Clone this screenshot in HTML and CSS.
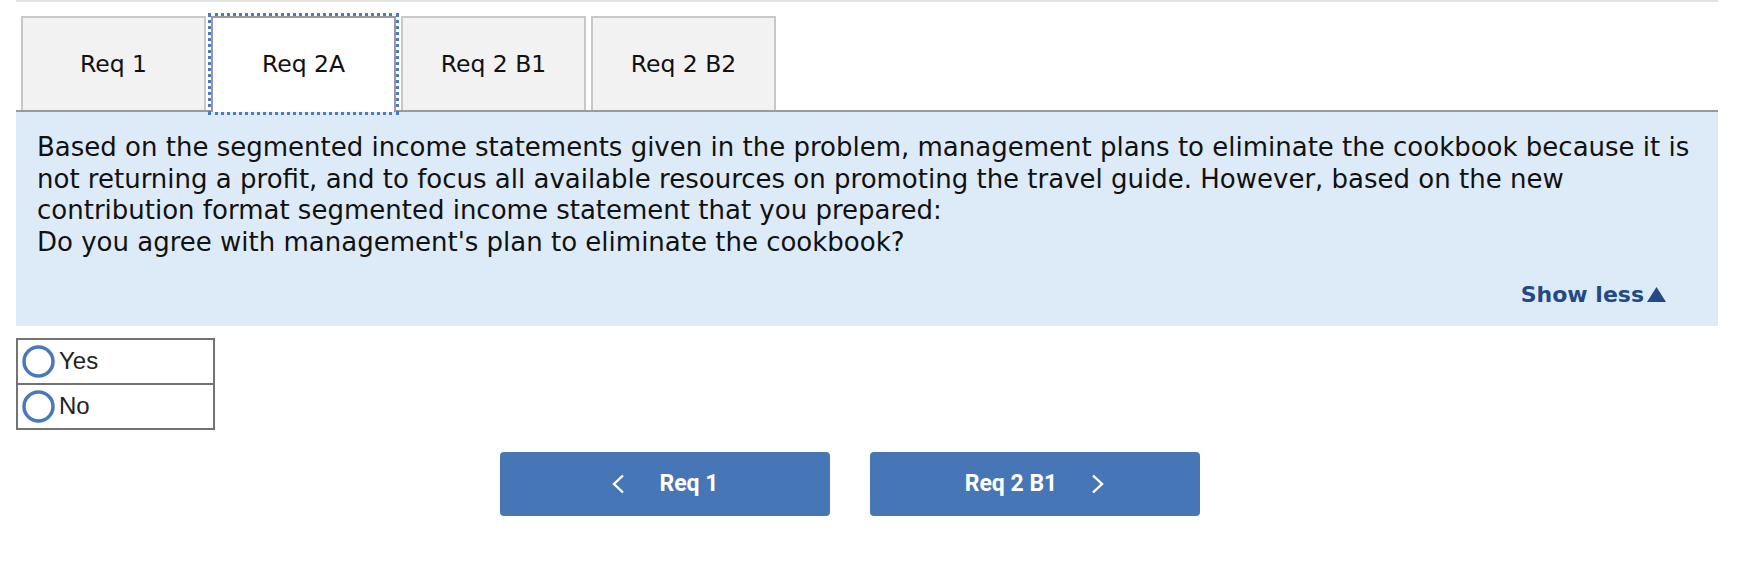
FILE: index.html
```html
<!DOCTYPE html>
<html lang="en">
<head>
<meta charset="utf-8">
<title>Req 2A</title>
<link rel="stylesheet" href="styles.css">
</head>
<body>
<div class="page">
  <div class="topline"></div>
  <div class="tabs">
    <div class="tab">Req 1</div>
    <div class="tab active">Req 2A</div>
    <div class="tab">Req 2 B1</div>
    <div class="tab">Req 2 B2</div>
  </div>
  <div class="panel">
    <p class="question">Based on the segmented income statements given in the problem, management plans to eliminate the cookbook because it is not returning a profit, and to focus all available resources on promoting the travel guide. However, based on the new contribution format segmented income statement that you prepared:<br>Do you agree with management's plan to eliminate the cookbook?</p>
    <div class="showless"><span class="showless-link">Show less</span><svg class="tri" width="19" height="15" viewBox="0 0 19 15"><polygon points="9.5,0 19,15 0,15" fill="#214a86"/></svg></div>
  </div>
  <div class="choices">
    <div class="choice">
      <svg class="radio" width="33" height="33" viewBox="0 0 33 33"><circle cx="16.5" cy="16.5" r="14.5" fill="#fff" stroke="#4a79ba" stroke-width="3.5"/></svg>
      <span class="label">Yes</span>
    </div>
    <div class="choice">
      <svg class="radio" width="33" height="33" viewBox="0 0 33 33"><circle cx="16.5" cy="16.5" r="14.5" fill="#fff" stroke="#4a79ba" stroke-width="3.5"/></svg>
      <span class="label">No</span>
    </div>
  </div>
  <div class="nav">
    <button class="navbtn" type="button">
      <svg class="chev" width="14" height="20" viewBox="0 0 14 20"><polyline points="12,1.5 3,10 12,18.5" fill="none" stroke="#fff" stroke-width="2.4"/></svg>
      <span>Req 1</span>
    </button>
    <button class="navbtn" type="button">
      <span>Req 2 B1</span>
      <svg class="chev" width="14" height="20" viewBox="0 0 14 20"><polyline points="2,1.5 11,10 2,18.5" fill="none" stroke="#fff" stroke-width="2.4"/></svg>
    </button>
  </div>
</div>
</body>
</html>
```
FILE: styles.css
```css
html, body {
  margin: 0;
  padding: 0;
  background: #ffffff;
}

.page {
  margin-left: 16px;
  width: 1702px;
  font-family: "DejaVu Sans", Verdana, sans-serif;
  color: #111111;
}

.topline {
  height: 2px;
  background: #e3e3e3;
}

.tabs {
  display: flex;
  gap: 5px;
  padding-left: 5px;
  margin-top: 14px;
  align-items: flex-start;
}

.tab {
  box-sizing: border-box;
  width: 185px;
  height: 94px;
  border: 2px solid #c8c8c8;
  border-bottom: none;
  background: #f2f2f2;
  display: flex;
  align-items: center;
  justify-content: center;
  font-size: 23.5px;
  color: #111111;
}

.tab.active {
  position: relative;
  z-index: 1;
  height: 96px;
  margin-bottom: -2px;
  padding-bottom: 2px;
  background: #ffffff;
  border-color: #9a9a9a;
  outline: 3px dotted #4a7bc4;
  outline-offset: 0;
}

.panel {
  border-top: 2px solid #9a9a9a;
  background: #ddebf8;
  padding: 20px 21px 18px 21px;
}

.question {
  margin: 0;
  font-size: 26px;
  line-height: 31.6px;
  color: #111111;
}

.showless {
  margin-top: 22.5px;
  display: flex;
  justify-content: flex-end;
  align-items: center;
  gap: 3px;
  padding-right: 31px;
  height: 27px;
}

.showless-link {
  font-weight: bold;
  font-size: 22px;
  line-height: 27px;
  color: #214a86;
}

.tri {
  display: block;
  margin-top: 1px;
}

.choices {
  margin-top: 12px;
  width: 199px;
  box-sizing: border-box;
  border: 2px solid #737373;
}

.choice {
  height: 43px;
  display: flex;
  align-items: center;
  gap: 4px;
  padding-left: 4px;
}

.choice + .choice {
  border-top: 2px solid #737373;
}

.radio {
  display: block;
  flex: none;
}

.label {
  font-family: "Liberation Sans", Arial, sans-serif;
  font-size: 24px;
  color: #222222;
}

.nav {
  margin-top: 22px;
  margin-left: 484px;
  display: flex;
  gap: 40px;
}

.navbtn {
  width: 330px;
  height: 64px;
  border: none;
  border-radius: 4px;
  background: #4776b6;
  color: #ffffff;
  font-family: Roboto, "Liberation Sans", sans-serif;
  font-weight: 700;
  font-size: 23px;
  display: flex;
  align-items: center;
  justify-content: center;
  gap: 34px;
  padding: 0;
}

.chev {
  display: block;
}
```
